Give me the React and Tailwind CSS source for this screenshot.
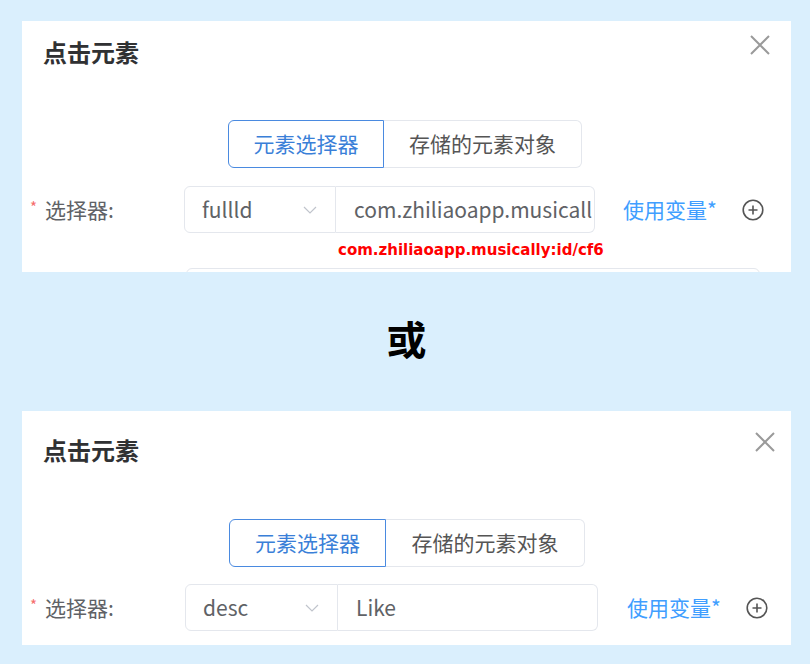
import React from 'react';

const CloseIcon = () => (
  <svg width="20" height="20" viewBox="0 0 20 20" fill="none" stroke="#9a9a9a" strokeWidth="2">
    <path d="M1 1 L19 19 M19 1 L1 19" />
  </svg>
);

const PlusCircle = () => (
  <svg width="22" height="22" viewBox="0 0 22 22" fill="none" stroke="#555" strokeWidth="1.6">
    <circle cx="11" cy="11" r="9.8" />
    <path d="M11 6.5 V15.5 M6.5 11 H15.5" />
  </svg>
);

const Chevron = () => (
  <svg width="14" height="8" viewBox="0 0 14 8" fill="none" stroke="#c0c4cc" strokeWidth="1.2">
    <path d="M1 1 L7 7 L13 1" />
  </svg>
);

const SelectorRow = ({ mode, value, labelW, selW, inW, gapA, gapB }) => (
  <div className="flex items-center h-[47px]">
    <div className={`flex items-center pl-[8px] ${labelW}`}>
      <span className="text-[#f56c6c] text-[15px] mr-[8px] -mt-[4px]">*</span>
      <span className="text-[21px] text-[#606266]">选择器:</span>
    </div>
    <div className={`flex items-center justify-between h-full border border-[#e4e7ed] rounded-l-[6px] pl-[17px] pr-[18px] ${selW}`}>
      <span className="text-[21px] text-[#606266]">{mode}</span>
      <Chevron />
    </div>
    <div className={`flex items-center h-full border border-l-0 border-[#e4e7ed] rounded-r-[6px] pl-[18px] overflow-hidden whitespace-nowrap ${inW}`}>
      <span className="text-[21px] text-[#606266]">{value}</span>
    </div>
    <span className={`text-[21px] text-[#409eff] ${gapA}`}>使用变量*</span>
    <span className={`flex ${gapB}`}>
      <PlusCircle />
    </span>
  </div>
);

const Tabs = ({ w1, w2 }) => (
  <div className="flex justify-center">
    <div className={`flex items-center justify-center h-[48px] border border-[#4a8ae0] rounded-l-[6px] text-[21px] text-[#3a7fd8] ${w1}`}>
      元素选择器
    </div>
    <div className={`flex items-center justify-center h-[48px] border border-l-0 border-[#e4e7ed] rounded-r-[6px] text-[21px] text-[#555] ${w2}`}>
      存储的元素对象
    </div>
  </div>
);

export default function App() {
  return (
    <div className="w-[810px] h-[664px] bg-[#daeffd] font-['Noto_Sans_CJK_SC','Noto_Sans',sans-serif] pt-[21px] pl-[22px] overflow-hidden">
      {/* first dialog */}
      <div className="w-[769px] h-[251px] bg-white overflow-hidden">
        <div className="flex justify-between pl-[21px] pr-[21px] pt-[14px]">
          <h2 className="text-[24px] leading-[32px] font-bold text-[#303133] mt-[1px]">点击元素</h2>
          <CloseIcon />
        </div>
        <div className="mt-[52px] pr-[3px]">
          <Tabs w1="w-[156px]" w2="w-[198px]" />
        </div>
        <div className="mt-[18px]">
          <SelectorRow
            mode="fullld"
            value="com.zhiliaoapp.musicall"
            labelW="w-[162px]"
            selW="w-[152px]"
            inW="w-[259px]"
            gapA="ml-[28px]"
            gapB="ml-[25px]"
          />
        </div>
        <div className="mt-[6px] pl-[316px] leading-[22px] text-[15px] font-bold text-[#ff0000] font-['DejaVu_Sans',sans-serif]">
          com.zhiliaoapp.musically:id/cf6
        </div>
        <div className="mt-[7px] ml-[164px] w-[574px] h-[40px] border border-[#e4e7ed] rounded-[6px]"></div>
      </div>

      {/* separator */}
      <div className="w-[769px] h-[139px] flex items-center justify-center pb-[8px]">
        <span className="text-[40px] font-bold text-black">或</span>
      </div>

      {/* second dialog */}
      <div className="w-[769px] h-[234px] bg-white overflow-hidden">
        <div className="flex justify-between pl-[21px] pr-[16px] pt-[21px]">
          <h2 className="text-[24px] leading-[32px] font-bold text-[#303133] mt-[2px]">点击元素</h2>
          <CloseIcon />
        </div>
        <div className="mt-[53px] pl-[1px]">
          <Tabs w1="w-[157px]" w2="w-[199px]" />
        </div>
        <div className="mt-[17px]">
          <SelectorRow
            mode="desc"
            value="Like"
            labelW="w-[163px]"
            selW="w-[153px]"
            inW="w-[260px]"
            gapA="ml-[29px]"
            gapB="ml-[25px]"
          />
        </div>
      </div>
    </div>
  );
}
